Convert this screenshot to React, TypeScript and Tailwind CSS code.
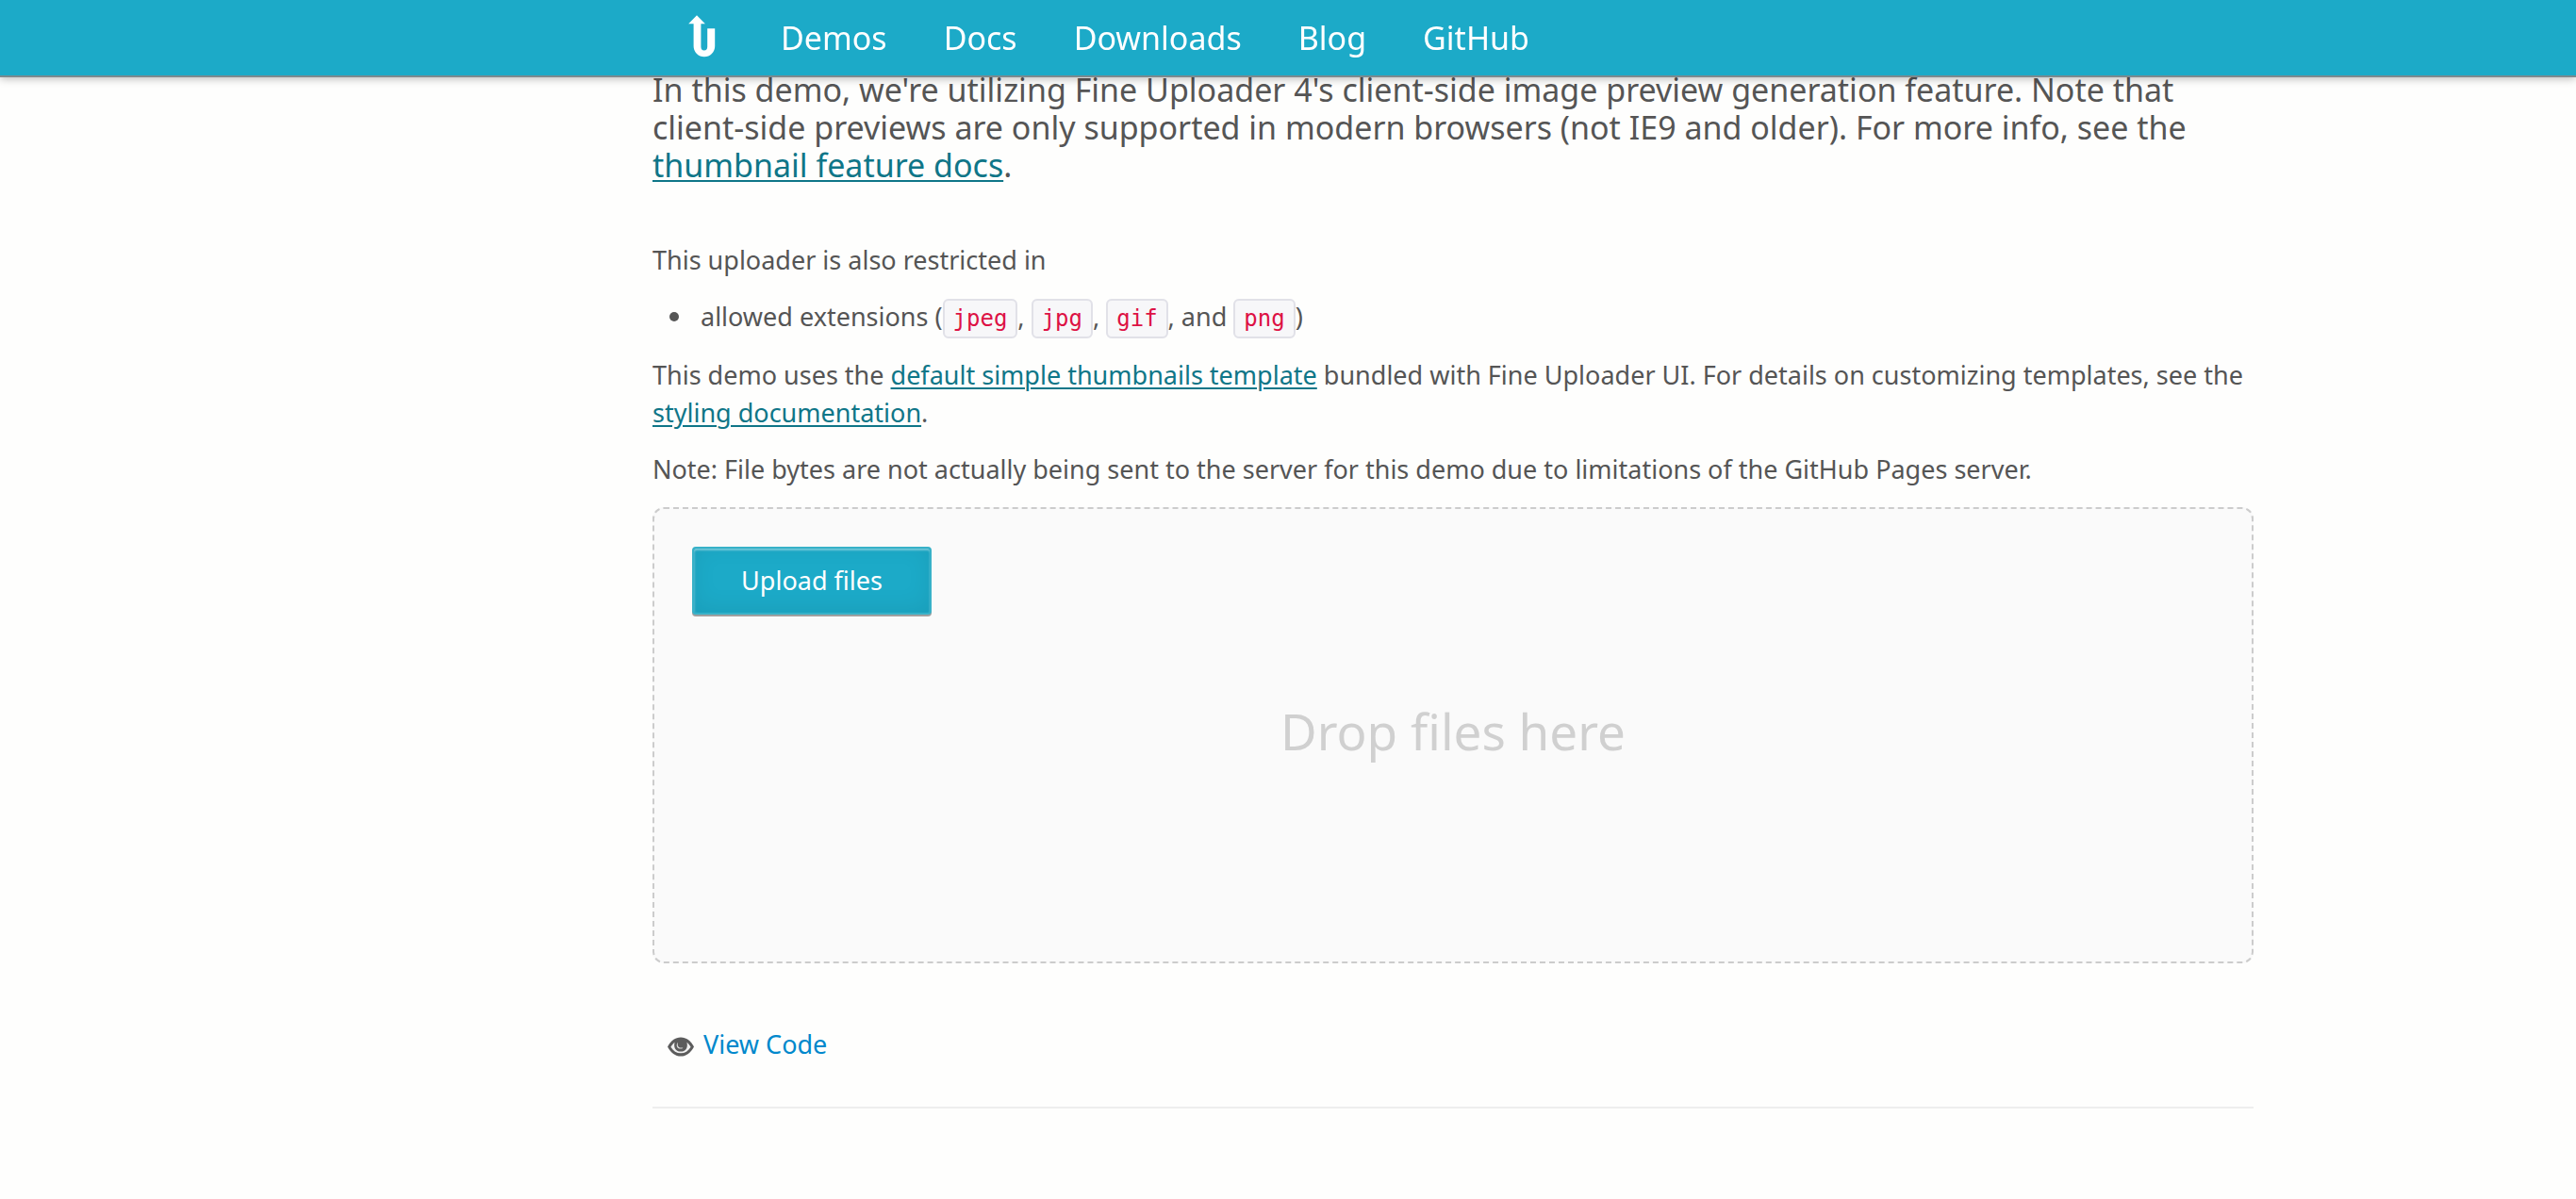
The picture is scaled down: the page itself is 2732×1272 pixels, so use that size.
import type { ReactNode } from "react";

const navItems = ["Demos", "Docs", "Downloads", "Blog", "GitHub"];

function Logo() {
  return (
    <svg width="29" height="45" viewBox="0 0 29 45" fill="#fff" aria-hidden="true">
      <path d="M9 .3 17.9 9.2H13.4V33.4a3.4 4 0 0 0 6.8 0V14.2H28.2V33a11.3 11.3 0 0 1-22.6 0V9.2H.2Z" />
    </svg>
  );
}

function EyeIcon() {
  return (
    <svg width="28" height="21" viewBox="0 0 28 21" aria-hidden="true">
      <path d="M0 10.5C3.4 4 8.2.4 14 .4S24.6 4 28 10.5C24.6 17 19.8 20.6 14 20.6S3.4 17 0 10.5Z" fill="#5c5c5c" />
      <path d="M3.400 10.700C4.600 8.600 6 6.900 7.600 5.700 6.200 10.400 8 15.600 14 15.600S21.800 10.400 20.400 5.700C22 6.900 23.400 8.600 24.600 10.700 22 15 18.400 17.300 14 17.300S6 15 3.400 10.700Z" fill="#f0f0f0" />
      <path d="M11 5.800C10 10.400 12.200 12.300 16.400 11.400 15.400 13.200 10.200 13.300 9.700 9.400 9.600 7.900 10.200 6.500 11 5.800Z" fill="#d8d8d8" />
    </svg>
  );
}

function TextLink({ children }: { children: ReactNode }) {
  return (
    <a href="#" className="text-[#0f7688] underline decoration-2 underline-offset-[3px]">
      {children}
    </a>
  );
}

function Ext({ children }: { children: ReactNode }) {
  return (
    <code className="rounded-md border-2 border-[#e1e1e8] bg-[#f7f7f9] px-[9px] py-[5px] font-['DejaVu_Sans_Mono',monospace] text-2xl leading-none text-[#dd1144]">
      {children}
    </code>
  );
}

export default function App() {
  return (
    <div className="min-h-screen bg-[#fefefd] font-['Noto_Sans',sans-serif] text-[27px] leading-10 text-[#555]">
      <header className="fixed inset-x-0 top-0 z-10 border-b-2 border-[#7b8a8f] bg-[#1caac8] shadow-[0_2px_8px_rgba(0,0,0,0.25)]">
        <div className="mx-auto max-w-[2048px] pl-[350px]">
          <nav className="flex h-20 items-center gap-[60px] pl-[38px] text-[34px] text-white">
            <a href="#" aria-label="Home" className="-mt-1 mr-[9px]">
              <Logo />
            </a>
            {navItems.map((item) => (
              <a key={item} href="#">
                {item}
              </a>
            ))}
          </nav>
        </div>
      </header>

      <main className="mx-auto max-w-[2048px] pt-[75px] pl-[350px]">
        <p className="mb-[61px] text-[34px]">
          In this demo, we're utilizing Fine Uploader 4's client-side image preview generation feature. Note that
          client-side previews are only supported in modern browsers (not IE9 and older). For more info, see the{" "}
          <TextLink>thumbnail feature docs</TextLink>.
        </p>

        <p className="mb-5">This uploader is also restricted in</p>
        <ul className="mb-[22px] pl-[18px]">
          <li className="flex items-center gap-[23px] before:size-[10px] before:shrink-0 before:rounded-full before:bg-[#555] before:content-['']">
            <span>
              allowed extensions (<Ext>jpeg</Ext>, <Ext>jpg</Ext>, <Ext>gif</Ext>, and <Ext>png</Ext>)
            </span>
          </li>
        </ul>
        <p className="mb-5">
          This demo uses the <TextLink>default simple thumbnails template</TextLink> bundled with Fine Uploader UI. For
          details on customizing templates, see the <TextLink>styling documentation</TextLink>.
        </p>
        <p className="mb-5">
          Note: File bytes are not actually being sent to the server for this demo due to limitations of the GitHub
          Pages server.
        </p>

        <section className="relative min-h-[484px] rounded-xl border-2 border-dashed border-[#ccc] bg-[#fafafa] p-10">
          <div className="pointer-events-none absolute inset-0 flex items-center justify-center pb-2 text-[53px] text-[#d0d0d0]">
            Drop files here
          </div>
          <button
            type="button"
            className="block h-[72px] w-[254px] rounded-[4px] border-2 border-[#37b1c8] bg-[#1caac8] text-[27px] text-white shadow-[inset_0_2px_2px_rgba(255,255,255,0.37),inset_2px_0_2px_rgba(255,255,255,0.07),0_2px_0_rgba(0,0,0,0.36),inset_0_-4px_24px_rgba(0,0,0,0.08)]"
          >
            Upload files
          </button>
        </section>

        <div className="mt-[66px] flex border-b-2 border-[#eee] pb-[46px] pl-4">
          <a href="#" className="flex items-center gap-[10px] text-[#0088cc]">
            <span className="pt-1">
              <EyeIcon />
            </span>
            View Code
          </a>
        </div>
      </main>
    </div>
  );
}
